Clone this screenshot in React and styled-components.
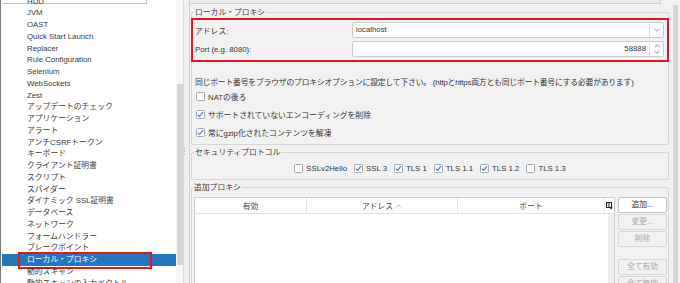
import styled, { createGlobalStyle } from "styled-components";

const GlobalStyle = createGlobalStyle`
  * { box-sizing: border-box; }
  html, body { margin: 0; padding: 0; background: #f2f2f2; }
  body {
    font-family: "Liberation Sans", "Noto Sans CJK JP", sans-serif;
    font-size: 7.8px;
    color: #333;
  }
`;

const treeItems = [
  "HUD", "JVM", "OAST", "Quick Start Launch", "Replacer", "Rule Configuration",
  "Selenium", "WebSockets", "Zest", "アップデートのチェック", "アプリケーション",
  "アラート", "アンチCSRFトークン", "キーボード", "クライアント証明書", "スクリプト",
  "スパイダー", "ダイナミック SSL証明書", "データベース", "ネットワーク",
  "フォームハンドラー", "ブレークポイント", "ローカル・プロキシ", "動的スキャン",
  "動的スキャンの入力ベクトル",
];

const protocols = [
  { name: "SSLv2Hello", on: false },
  { name: "SSL 3", on: true },
  { name: "TLS 1", on: true },
  { name: "TLS 1.1", on: true },
  { name: "TLS 1.2", on: true },
  { name: "TLS 1.3", on: false },
];

const Screen = styled.div`
  display: flex;
  width: 680px;
  height: 283px;
  overflow: hidden;
  background: #f2f2f2;
`;

/* ---------- left tree ---------- */
const LeftPane = styled.div`
  width: 176px;
  flex: none;
  display: flex;
  flex-direction: column;
  background: #fff;
  border-left: 1px solid #7a7a7a;
  padding-left: 1px;
  overflow: hidden;
`;

const FilterStub = styled.div`
  width: 145px;
  height: 4px;
  flex: none;
  border-right: 1px solid #c4c4c4;
  border-bottom: 1px solid #c4c4c4;
`;

const Tree = styled.div`
  display: flex;
  flex-direction: column;
  margin-top: -8.3px;
`;

const TreeRow = styled.div`
  position: relative;
  flex: none;
  height: 11.75px;
  line-height: 11.75px;
  padding-left: 25px;
  white-space: nowrap;
  background: ${(p) => (p.$selected ? "#2675bf" : "transparent")};
  color: ${(p) => (p.$selected ? "#fff" : "#3a3a3a")};
`;

const Mark = styled.span`
  position: absolute;
  left: 16px;
  top: -2px;
  width: 134px;
  height: 17px;
  border: 2px solid #e5161d;
`;

const TreeScroll = styled.div`
  width: 7px;
  flex: none;
  background: #f7f7f7;
  padding: 84px 0 0 1px;
`;

const Thumb = styled.div`
  width: ${(p) => p.$w}px;
  height: ${(p) => p.$h}px;
  background: #d6d6d6;
`;

const Splitter = styled.div`
  width: 6px;
  flex: none;
  background: #f0f0f0;
  border-left: 1px solid #dcdcdc;
  padding-top: 147px;
`;

/* ---------- right panel ---------- */
const RightPane = styled.div`
  flex: 1;
  min-width: 0;
  display: flex;
  border-left: 1px solid #d2d2d2;
  background: #f2f2f2;
`;

const Content = styled.div`
  flex: 1;
  min-width: 0;
  display: flex;
  flex-direction: column;
`;

const TopStub = styled.div`
  width: 471px;
  height: 4px;
  flex: none;
  background: #ececec;
  border-right: 1px solid #cfcfcf;
  border-bottom: 1px solid #cfcfcf;
`;

const Group = styled.fieldset`
  flex: none;
  min-width: 0;
  margin: ${(p) => p.$mt}px 3px 0 1px;
  padding: ${(p) => p.$pad};
  border: 1px solid #d6d6d6;
  border-radius: 2px;
`;

const Legend = styled.legend`
  margin-left: -1px;
  padding: 0 1px;
  line-height: 11px;
  color: #3a3a3a;
`;

const Highlight = styled.div`
  margin: 0 -4px;
  border: 2px solid #e5161d;
  padding: 2px 3px 3px 2px;
  display: grid;
  grid-template-columns: 157px 1fr;
  row-gap: 3px;
  align-items: center;
`;

const Label = styled.div`
  white-space: nowrap;
`;

const Field = styled.div`
  height: 16px;
  display: flex;
  background: #fff;
  border: 1px solid #cbcbcb;
  border-radius: 2px;
`;

const FieldText = styled.div`
  flex: 1;
  line-height: 14px;
  padding: 0 3px;
  text-align: ${(p) => p.$align || "left"};
`;

const FieldButton = styled.div`
  width: 14px;
  flex: none;
  border-left: 1px solid #e2e2e2;
  display: flex;
  flex-direction: column;
  align-items: center;
  justify-content: center;
  gap: 2px;
`;

const Note = styled.div`
  margin-top: 14.5px;
  line-height: 11px;
  letter-spacing: -0.18px;
  white-space: nowrap;
`;

const CheckRow = styled.div`
  height: 18px;
  display: flex;
  align-items: center;
  gap: 3px;
  padding-left: 1px;
  white-space: nowrap;
`;

const Box = styled.span`
  width: 9px;
  height: 9px;
  flex: none;
  display: flex;
  align-items: center;
  justify-content: center;
  background: #fff;
  border: 1px solid #a8a8a8;
  border-radius: 1.5px;
`;

const ProtoRow = styled.div`
  height: 14px;
  display: flex;
  justify-content: center;
  align-items: center;
  gap: 7px;
`;

const ProtoItem = styled.div`
  display: flex;
  align-items: center;
  gap: 3px;
  white-space: nowrap;
`;

const ProxyBody = styled.div`
  display: flex;
  gap: 3px;
  align-items: flex-start;
`;

const Table = styled.div`
  flex: 1;
  height: 110px;
  display: flex;
  flex-direction: column;
  background: #fff;
  border: 1px solid #cfcfcf;
`;

const Header = styled.div`
  height: 16px;
  flex: none;
  display: flex;
  border-bottom: 1px solid #e2e2e2;
`;

const HeadCell = styled.div`
  width: ${(p) => (p.$w ? `${p.$w}px` : "auto")};
  flex: ${(p) => (p.$w ? "none" : "1")};
  display: flex;
  align-items: center;
  justify-content: center;
  gap: 3px;
  border-right: ${(p) => (p.$last ? "none" : "1px solid #e4e4e4")};
  color: #444;
`;

const Body = styled.div`
  flex: 1;
  display: flex;
`;

const BodyArea = styled.div`
  flex: 1;
  background: #fff;
`;

const BodyGutter = styled.div`
  width: 6px;
  background: #efefef;
`;

const Buttons = styled.div`
  width: 49px;
  flex: none;
  display: flex;
  flex-direction: column;
  gap: 1px;
`;

const Btn = styled.div`
  height: 16px;
  line-height: 14px;
  text-align: center;
  border-radius: 2px;
  border: 1px solid ${(p) => (p.$disabled ? "#d9d9d9" : "#c4c4c4")};
  background: ${(p) => (p.$disabled ? "#f2f2f2" : "#fff")};
  color: ${(p) => (p.$disabled ? "#a8a8a8" : "#333")};
`;

const Spacer = styled.div`
  height: 10px;
`;

const VScroll = styled.div`
  width: 8px;
  flex: none;
  padding: 5px 0 0 1px;
  background: #f2f2f2;
`;

/* ---------- icons ---------- */
const Check = () => (
  <svg width="7" height="7" viewBox="0 0 7 7">
    <path d="M0.8 3.6 L2.6 5.4 L6.2 1" fill="none" stroke="#2d7fd2" strokeWidth="1.1" />
  </svg>
);

const CheckBox = ({ on }) => <Box>{on && <Check />}</Box>;

const ChevronDown = () => (
  <svg width="6" height="4" viewBox="0 0 6 4">
    <path d="M0.5 0.8 L3 3.2 L5.5 0.8" fill="none" stroke="#888" strokeWidth="0.9" />
  </svg>
);

const ChevronUp = ({ color = "#888" }) => (
  <svg width="6" height="4" viewBox="0 0 6 4">
    <path d="M0.5 3.2 L3 0.8 L5.5 3.2" fill="none" stroke={color} strokeWidth="0.9" />
  </svg>
);

const Grip = () => (
  <svg width="3" height="9" viewBox="0 0 3 9">
    <rect x="0" y="0.5" width="1" height="1" fill="#9a9a9a" />
    <rect x="0" y="3.5" width="1" height="1" fill="#9a9a9a" />
    <rect x="0" y="6.5" width="1" height="1" fill="#9a9a9a" />
  </svg>
);

const ColumnControl = () => (
  <svg width="7" height="8" viewBox="0 0 7 8">
    <rect x="0.5" y="0.5" width="5" height="5" fill="none" stroke="#222" strokeWidth="1" />
    <path d="M3 0.5 V5.5" stroke="#222" strokeWidth="1" />
    <path d="M3.5 5.5 L6.5 5.5 L5 7.5 Z" fill="#222" />
  </svg>
);

export default function App() {
  return (
    <>
      <GlobalStyle />
      <Screen>
        <LeftPane>
          <FilterStub />
          <Tree>
            {treeItems.map((item) => {
              const selected = item === "ローカル・プロキシ";
              return (
                <TreeRow key={item} $selected={selected}>
                  {item}
                  {selected && <Mark />}
                </TreeRow>
              );
            })}
          </Tree>
        </LeftPane>
        <TreeScroll>
          <Thumb $w={6} $h={181} />
        </TreeScroll>
        <Splitter>
          <Grip />
        </Splitter>

        <RightPane>
          <Content>
            <TopStub />

            <Group $mt={2.5} $pad="0.5px 3px 2px 3px">
              <Legend>ローカル・プロキシ</Legend>
              <Highlight>
                <Label>アドレス:</Label>
                <Field>
                  <FieldText>localhost</FieldText>
                  <FieldButton>
                    <ChevronDown />
                  </FieldButton>
                </Field>
                <Label>Port (e.g. 8080):</Label>
                <Field>
                  <FieldText $align="right">58888</FieldText>
                  <FieldButton>
                    <ChevronUp />
                    <ChevronDown />
                  </FieldButton>
                </Field>
              </Highlight>
              <Note>
                同じポート番号をブラウザのプロキシオプションに設定して下さい。 (httpとhttps両方とも同じポート番号にする必要があります)
              </Note>
              <CheckRow>
                <CheckBox on={false} />
                NATの後ろ
              </CheckRow>
              <CheckRow>
                <CheckBox on />
                サポートされていないエンコーディングを削除
              </CheckRow>
              <CheckRow>
                <CheckBox on />
                常にgzip化されたコンテンツを解凍
              </CheckRow>
            </Group>

            <Group $mt={2} $pad="4px 3px 3px 3px">
              <Legend>セキュリティプロトコル</Legend>
              <ProtoRow>
                {protocols.map((p) => (
                  <ProtoItem key={p.name}>
                    <CheckBox on={p.on} />
                    {p.name}
                  </ProtoItem>
                ))}
              </ProtoRow>
            </Group>

            <Group $mt={2} $pad="4.5px 1px 0 2px">
              <Legend>追加プロキシ</Legend>
              <ProxyBody>
                <Table>
                  <Header>
                    <HeadCell $w={112}>有効</HeadCell>
                    <HeadCell $w={151}>
                      アドレス
                      <ChevronUp color="#aaa" />
                    </HeadCell>
                    <HeadCell>ポート</HeadCell>
                    <HeadCell $w={9} $last>
                      <ColumnControl />
                    </HeadCell>
                  </Header>
                  <Body>
                    <BodyArea />
                    <BodyGutter />
                  </Body>
                </Table>
                <Buttons>
                  <Btn>追加...</Btn>
                  <Btn $disabled>変更...</Btn>
                  <Btn $disabled>削除</Btn>
                  <Spacer />
                  <Btn $disabled>全て有効</Btn>
                  <Btn $disabled>全て無効</Btn>
                </Buttons>
              </ProxyBody>
            </Group>
          </Content>
          <VScroll>
            <Thumb $w={5} $h={300} />
          </VScroll>
        </RightPane>
      </Screen>
    </>
  );
}
